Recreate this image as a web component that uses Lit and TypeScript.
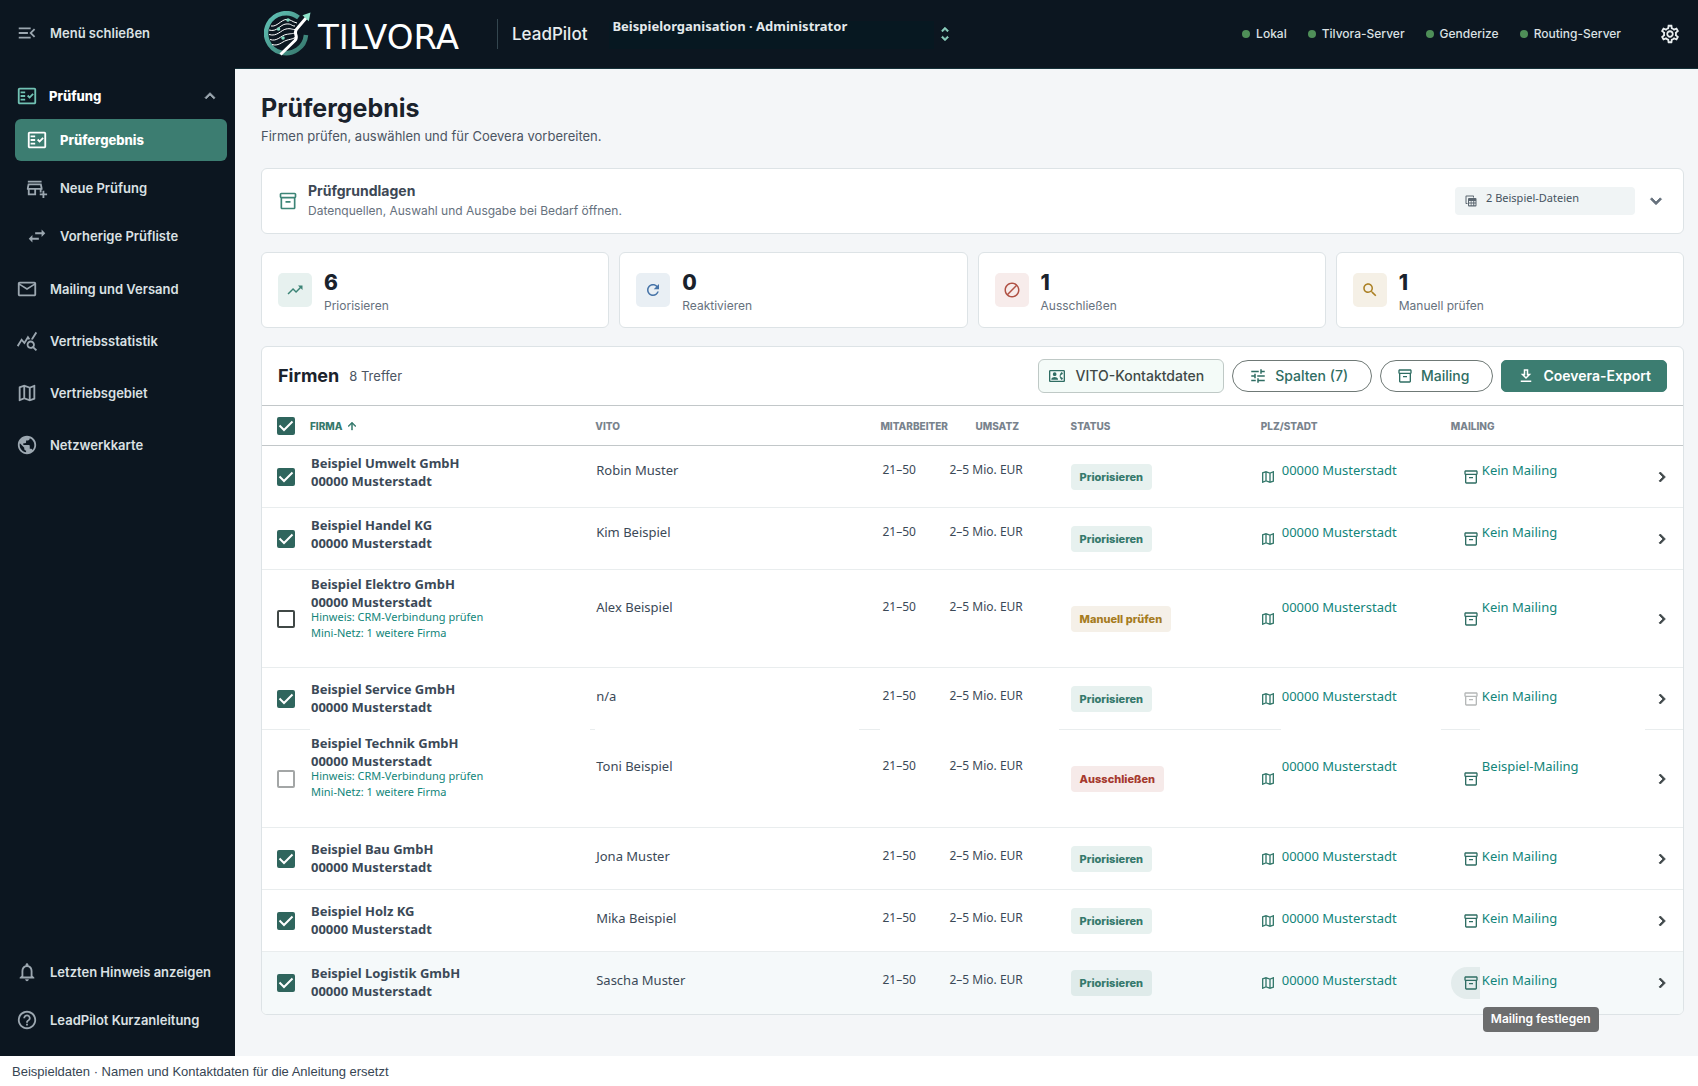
import { LitElement, html, css, svg, nothing } from "lit";
import { customElement } from "lit/decorators.js";
import { classMap } from "lit/directives/class-map.js";

const ICONS: Record<string, string> = {
  menuOpen: "M3 18h13v-2H3v2zm0-5h10v-2H3v2zm0-7v2h13V6H3zm18 9.59L17.42 12 21 8.41 19.59 7l-5 5 5 5L21 15.59z",
  factCheck: "M20 3H4c-1.1 0-2 .9-2 2v14c0 1.1.9 2 2 2h16c1.1 0 2-.9 2-2V5c0-1.1-.9-2-2-2zm0 16H4V5h16v14zM19.41 10.42L17.99 9l-3.17 3.17-1.41-1.42L12 12.16 14.82 15zM5 7h5v2H5zM5 11h5v2H5zM5 15h5v2H5z",
  addBusiness: "M15 17h2v-3h1v-2l-1-5H2l-1 5v2h1v6h9v-6h4v3zm-6 1H4v-4h5v4zm-5.96-6l.6-3h11.72l.6 3H3.04zM2 4h15v2H2zM20 18v-3h-2v3h-3v2h3v3h2v-3h3v-2z",
  swap: "M6.99 11L3 15l3.99 4v-3H14v-2H6.99v-3zM21 9l-3.99-4v3H10v2h7.01v3L21 9z",
  mail: "M22 6c0-1.1-.9-2-2-2H4c-1.1 0-2 .9-2 2v12c0 1.1.9 2 2 2h16c1.1 0 2-.9 2-2V6zm-2 0l-8 5-8-5h16zm0 12H4V8l8 5 8-5v10z",
  stats: "M19.88 18.47c.44-.7.7-1.51.7-2.39 0-2.49-2.01-4.5-4.5-4.5s-4.5 2.01-4.5 4.5 2.01 4.5 4.49 4.5c.88 0 1.7-.26 2.39-.7L21.58 23 23 21.58l-3.12-3.11zm-3.8.11c-1.38 0-2.5-1.12-2.5-2.5s1.12-2.5 2.5-2.5 2.5 1.12 2.5 2.5-1.12 2.5-2.5 2.5zm-.36-8.5c-.74.02-1.45.18-2.1.45l-.55-.83-3.8 6.18-3.01-3.52-3.63 5.81L1 17l5-8 3 3.5L13 6l2.72 4.08zm2.59.5c-.64-.28-1.33-.45-2.05-.49L21.38 2 23 3.18l-4.69 7.4z",
  map: "M20.5 3l-.16.03L15 5.1 9 3 3.36 4.9c-.21.07-.36.25-.36.48V20.5c0 .28.22.5.5.5l.16-.03L9 18.9l6 2.1 5.64-1.9c.21-.07.36-.25.36-.48V3.5c0-.28-.22-.5-.5-.5zM10 5.47l4 1.4v11.66l-4-1.4V5.47zm-5 .99l3-1.01v11.7l-3 1.16V6.46zm14 11.08l-3 1.01V6.86l3-1.16v11.84z",
  globe: "M12 2C6.48 2 2 6.48 2 12s4.48 10 10 10 10-4.48 10-10S17.52 2 12 2zm-1 17.93c-3.95-.49-7-3.85-7-7.93 0-.62.08-1.21.21-1.79L9 15v1c0 1.1.9 2 2 2v1.93zm6.9-2.54c-.26-.81-1-1.39-1.9-1.39h-1v-3c0-.55-.45-1-1-1H8v-2h2c.55 0 1-.45 1-1V7h2c1.1 0 2-.9 2-2v-.41c2.93 1.19 5 4.06 5 7.41 0 2.08-.8 3.97-2.1 5.39z",
  bell: "M12 22c1.1 0 2-.9 2-2h-4c0 1.1.89 2 2 2zm6-6v-5c0-3.07-1.64-5.64-4.5-6.32V4c0-.83-.67-1.5-1.5-1.5s-1.5.67-1.5 1.5v.68C7.63 5.36 6 7.92 6 11v5l-2 2v1h16v-1l-2-2zm-2 1H8v-6c0-2.48 1.51-4.5 4-4.5s4 2.02 4 4.5v6z",
  help: "M11 18h2v-2h-2v2zm1-16C6.48 2 2 6.48 2 12s4.48 10 10 10 10-4.48 10-10S17.52 2 12 2zm0 18c-4.41 0-8-3.59-8-8s3.59-8 8-8 8 3.59 8 8-3.59 8-8 8zm0-14c-2.21 0-4 1.79-4 4h2c0-1.1.9-2 2-2s2 .9 2 2c0 2-3 1.75-3 5h2c0-2.25 3-2.5 3-5 0-2.21-1.79-4-4-4z",
  archive: "M20 2H4c-1 0-2 .9-2 2v3.01c0 .72.43 1.34 1 1.69V20c0 1.1 1.1 2 2 2h14c.9 0 2-.9 2-2V8.7c.57-.35 1-.97 1-1.69V4c0-1.1-1-2-2-2zm-1 18H5V9h14v11zm1-13H4V4h16v3zM9 12h6v2H9z",
  expandMore: "M16.59 8.59L12 13.17 7.41 8.59 6 10l6 6 6-6z",
  expandLess: "M12 8l-6 6 1.41 1.41L12 10.83l4.59 4.58L18 14z",
  chevronRight: "M10 6L8.59 7.41 13.17 12l-4.58 4.59L10 18l6-6z",
  unfold: "M12 5.83L15.17 9l1.41-1.41L12 3 7.41 7.59 8.83 9 12 5.83zm0 12.34L8.83 15l-1.41 1.41L12 21l4.59-4.59L15.17 15 12 18.17z",
  trending: "M16 6l2.29 2.29-4.88 4.88-4-4L2 16.59 3.41 18l6-6 4 4 6.3-6.29L22 12V6z",
  refresh: "M17.65 6.35C16.2 4.9 14.21 4 12 4c-4.42 0-7.99 3.58-7.99 8s3.57 8 7.99 8c3.73 0 6.84-2.55 7.73-6h-2.08c-.82 2.33-3.04 4-5.65 4-3.31 0-6-2.69-6-6s2.69-6 6-6c1.66 0 3.14.69 4.22 1.78L13 11h7V4l-2.35 2.35z",
  block: "M12 2C6.48 2 2 6.48 2 12s4.48 10 10 10 10-4.48 10-10S17.52 2 12 2zM4 12c0-4.42 3.58-8 8-8 1.85 0 3.55.63 4.9 1.69L5.69 16.9C4.63 15.55 4 13.85 4 12zm8 8c-1.85 0-3.55-.63-4.9-1.69L18.31 7.1C19.37 8.45 20 10.15 20 12c0 4.42-3.58 8-8 8z",
  search: "M15.5 14h-.79l-.28-.27C15.41 12.59 16 11.11 16 9.5 16 5.91 13.09 3 9.5 3S3 5.91 3 9.5 5.91 16 9.5 16c1.61 0 3.09-.59 4.23-1.57l.27.28v.79l5 4.99L20.49 19l-4.99-5zm-6 0C7.01 14 5 11.99 5 9.5S7.01 5 9.5 5 14 7.01 14 9.5 11.99 14 9.5 14z",
  tune: "M3 17v2h6v-2H3zM3 5v2h10V5H3zm10 16v-2h8v-2h-8v-2h-2v6h2zM7 9v2H3v2h4v2h2V9H7zm14 4v-2H11v2h10zm-6-4h2V7h4V5h-4V3h-2v6z",
  download: "M19 9h-4V3H9v6H5l7 7 7-7zm-8 2V5h2v6h1.17L12 13.17 9.83 11H11zm-6 7h14v2H5z",
  arrowUp: "M4 12l1.41 1.41L11 7.83V20h2V7.83l5.58 5.59L20 12l-8-8-8 8z",
  contact: "M22 3H2C.9 3 0 3.9 0 5v14c0 1.1.9 2 2 2h20c1.1 0 2-.9 2-2V5c0-1.1-.9-2-2-2zm0 16H2V5h20v14zM8.5 6.500a2.800 2.800 0 1 1 0 5.600 2.800 2.800 0 0 1 0-5.600zM3.500 17.600v-1c0-1.900 3.300-3 5-3s5 1.100 5 3v1zM17.850 14h1.640L21 16l-1.990 1.990c-1.310-.98-2.280-2.380-2.730-3.990-.18-.64-.28-1.310-.28-2s.1-1.360.28-2c.45-1.620 1.420-3.010 2.730-3.990L21 8l-1.510 2h-1.640c-.22.63-.35 1.300-.35 2s.13 1.370.35 2z",
  files: "M4 1h12c1.100 0 2 .9 2 2v2h-2V3H3v13h2v2H3c-1.100 0-2-.9-2-2V3c0-1.100.9-2 3-2zM8 6h13a2 2 0 0 1 2 2v13a2 2 0 0 1-2 2H8a2 2 0 0 1-2-2V8a2 2 0 0 1 2-2zM8 12v3h3.500v-3zM13 12v3h3.500v-3zM18.500 12v3H21v-3zM8 17v3.500h3.500V17zM13 17v3.500h3.500V17zM18.500 17v3.500H21V17z",
  settings: "M19.43 12.98c.04-.32.07-.64.07-.98 0-.34-.03-.66-.07-.98l2.11-1.65c.19-.15.24-.42.12-.64l-2-3.46c-.09-.16-.26-.25-.44-.25-.06 0-.12.01-.17.03l-2.49 1c-.52-.4-1.08-.73-1.69-.98l-.38-2.65C14.46 2.18 14.25 2 14 2h-4c-.25 0-.46.18-.49.42l-.38 2.65c-.61.25-1.17.59-1.69.98l-2.49-1c-.06-.02-.12-.03-.18-.03-.17 0-.34.09-.43.25l-2 3.46c-.13.22-.07.49.12.64l2.11 1.65c-.04.32-.07.65-.07.98 0 .33.03.66.07.98l-2.11 1.65c-.19.15-.24.42-.12.64l2 3.46c.09.16.26.25.44.25.06 0 .12-.01.17-.03l2.49-1c.52.4 1.08.73 1.69.98l.38 2.65c.03.24.24.42.49.42h4c.25 0 .46-.18.49-.42l.38-2.65c.61-.25 1.17-.59 1.69-.98l2.49 1c.06.02.12.03.18.03.17 0 .34-.09.43-.25l2-3.46c.12-.22.07-.49-.12-.64l-2.11-1.65zm-1.98-1.71c.04.31.05.52.05.73 0 .21-.02.43-.05.73l-.14 1.13.89.7 1.08.84-.7 1.21-1.27-.51-1.04-.42-.9.68c-.43.32-.84.56-1.25.73l-1.06.43-.16 1.13-.2 1.35h-1.4l-.19-1.35-.16-1.13-1.06-.43c-.43-.18-.83-.41-1.23-.71l-.91-.7-1.06.43-1.27.51-.7-1.21 1.08-.84.89-.7-.14-1.13c-.03-.31-.05-.54-.05-.74s.02-.43.05-.73l.14-1.13-.89-.7-1.08-.84.7-1.21 1.27.51 1.04.42.9-.68c.43-.32.84-.56 1.25-.73l1.06-.43.16-1.13.2-1.35h1.39l.19 1.35.16 1.13 1.06.43c.43.18.83.41 1.23.71l.91.7 1.06-.43 1.27-.51.7 1.21-1.07.85-.89.7.14 1.13zM12 8c-2.21 0-4 1.79-4 4s1.79 4 4 4 4-1.79 4-4-1.79-4-4-4zm0 6c-1.1 0-2-.9-2-2s.9-2 2-2 2 .9 2 2-.9 2-2 2z",
};

const icon = (name: string, size: number, bold = false) => html`
  <svg class=${bold ? "icon bold" : "icon"} width=${size} height=${size} viewBox="0 0 24 24" aria-hidden="true">
    <path fill="currentColor" fill-rule="evenodd" d=${ICONS[name]}></path>
  </svg>`;

interface Firm {
  name: string;
  contact: string;
  status: "prio" | "manual" | "exclude";
  checked: boolean;
  layout: "high" | "mid" | "tall";
  hints?: boolean;
  disabledBox?: boolean;
  disabledMailing?: boolean;
  mailing?: string;
  covers?: boolean;
  hovered?: boolean;
}

const FIRMS: Firm[] = [
  { name: "Beispiel Umwelt GmbH", contact: "Robin Muster", status: "prio", checked: true, layout: "high" },
  { name: "Beispiel Handel KG", contact: "Kim Beispiel", status: "prio", checked: true, layout: "high" },
  { name: "Beispiel Elektro GmbH", contact: "Alex Beispiel", status: "manual", checked: false, layout: "tall", hints: true },
  { name: "Beispiel Service GmbH", contact: "n/a", status: "prio", checked: true, layout: "mid", disabledMailing: true },
  { name: "Beispiel Technik GmbH", contact: "Toni Beispiel", status: "exclude", checked: false, layout: "tall", hints: true, disabledBox: true, mailing: "Beispiel-Mailing", covers: true },
  { name: "Beispiel Bau GmbH", contact: "Jona Muster", status: "prio", checked: true, layout: "mid" },
  { name: "Beispiel Holz KG", contact: "Mika Beispiel", status: "prio", checked: true, layout: "mid" },
  { name: "Beispiel Logistik GmbH", contact: "Sascha Muster", status: "prio", checked: true, layout: "mid", hovered: true },
];

const STATUS_LABEL = { prio: "Priorisieren", manual: "Manuell prüfen", exclude: "Ausschließen" };

@customElement("app-root")
export class AppRoot extends LitElement {
  static styles = css`
    :host {
      display: flex;
      flex-direction: column;
      min-height: 100vh;
      background: #fff;
      color: #1a222c;
      font-family: Inter, "Noto Sans", sans-serif;
      font-size: 13px;
      line-height: 20px;
    }
    * { box-sizing: border-box; }
    button, select { font: inherit; color: inherit; border: 0; background: none; padding: 0; cursor: pointer; text-align: left; }
    a { color: inherit; text-decoration: none; }
    h1, h2, p { margin: 0; }
    .icon { display: block; flex: none; }
    .icon.bold path { stroke: currentColor; stroke-width: 1; }

    .shell { flex: 1; display: flex; background: #f4f6f8; }
    .side {
      flex: none; width: 235px; display: flex; flex-direction: column;
      background: #0c1620; color: #dbe1e4; font-weight: 600; padding: 7px 0 12px;
    }
    .side .icon { color: #9ca7b0; }
    .item { display: flex; align-items: center; gap: 12px; height: 52px; padding: 0 16px; }
    .item.low { height: 48px; }
    .group { margin-top: 14px; height: 46px; color: #fff; font-weight: 800; padding-right: 15px; gap: 11px; }
    .group .icon:first-child { color: #71c2b4; }
    .group span { flex: 1; }
    .sub { margin: 0 8px 6px 15px; height: 42px; padding: 0 11px; gap: 12px; border-radius: 6px; }
    .sub.active { background: #3c7d71; color: #fff; font-weight: 800; }
    .sub.active .icon { color: #fff; }
    .fill { flex: 1; }

    .page { flex: 1; min-width: 0; display: flex; flex-direction: column; }
    .top {
      display: flex; align-items: center; height: 69px; padding: 0 12px 0 29px;
      background: #0c1620; border-bottom: 1px solid #163139; color: #dbe1e4;
    }
    .brand { display: flex; align-items: center; gap: 7px; color: #fff; }
    .word { width: 161px; font-family: "DejaVu Sans", sans-serif; font-size: 34px; line-height: 40px; padding-top: 6px; }
    .product { margin-left: 18px; padding-left: 14px; border-left: 1px solid #34464f; font-size: 17px; font-weight: 500; line-height: 30px; color: #e8edee; }
    .org { display: flex; align-items: center; gap: 2px; margin-left: 22px; color: #8fd3c0; }
    .org select {
      appearance: none; width: 325px; height: 38px; padding: 0 0 16px 3px; line-height: 20px;
      background: linear-gradient(#071821, #071821) 0 6px / 100% 28px no-repeat;
      color: #e4eaec; font-family: "Noto Sans", sans-serif; font-size: 13px; font-weight: 700;
    }
    .services { display: flex; gap: 21px; margin: 0 33px 0 auto; padding: 0; list-style: none; font-size: 12px; font-weight: 500; }
    .services li { display: flex; align-items: center; gap: 6px; white-space: nowrap; }
    .services li::before { content: ""; width: 8px; height: 8px; border-radius: 50%; background: #4f8f58; }
    .gear { padding: 5px; color: #e8edee; }

    main { padding: 23px 14px 41px 26px; }
    h1 { font-size: 25px; line-height: 32px; font-weight: 700; }
    .lead { margin-top: 2px; color: #4b5563; }
    .card { background: #fff; border: 1px solid #dde3e6; border-radius: 6px; }

    .basis { width: 100%; display: flex; align-items: center; margin-top: 22px; padding: 12px 16px; color: #66717d; }
    .basis > .icon:first-child { color: #3c8476; }
    .basis-text { flex: 1; margin-left: 10px; display: block; }
    .basis-text b { display: block; color: #3d4855; font-size: 14px; font-weight: 700; }
    .basis-text span { display: block; font-size: 12px; }
    .files {
      display: flex; align-items: center; gap: 9px; width: 180px; height: 28px; margin-right: 10px; padding: 0 10px;
      background: #f0f4f5; border-radius: 4px; color: #5b6670;
    }
    .files span { font-family: "Noto Sans", sans-serif; font-size: 11px; line-height: 18px; padding-bottom: 6px; color: #465361; }

    .stats { display: grid; grid-template-columns: repeat(4, minmax(0, 1fr)); gap: 10px; margin: 18px 0; }
    .stat { display: flex; align-items: center; gap: 12px; height: 76px; padding: 0 16px; }
    .badge { display: grid; place-items: center; width: 34px; height: 34px; border-radius: 5px; }
    .badge.green { background: #e7f1ef; color: #3c8476; }
    .badge.blue { background: #e9eff4; color: #4774a8; }
    .badge.red { background: #f7eceb; color: #b05245; }
    .badge.amber { background: #f5f0e6; color: #ab8024; }
    .figures { padding-top: 6px; }
    .stat strong { display: block; font-size: 21px; line-height: 26px; font-weight: 800; }
    .stat span { display: block; font-size: 12px; color: #66717d; }

    .tools { display: flex; align-items: center; gap: 8px; height: 58px; padding: 0 16px; }
    h2 { font-size: 18px; line-height: 24px; }
    .hits { flex: 1; margin-left: 2px; color: #4b5563; }
    .btn { display: flex; align-items: center; gap: 8px; height: 32px; padding: 0 23px 0 16px; border: 1px solid #6f7976; border-radius: 16px; color: #2f6d63; font-size: 14px; font-weight: 500; white-space: nowrap; }
    .btn.vito { height: 34px; gap: 10px; padding: 0 19px 0 10px; background: #f4fbf8; border: 1px solid #bfc9c6; border-radius: 6px; color: #3f4947; }
    .btn.vito .icon { color: #2f6d63; }
    .btn.export { gap: 8px; padding: 0 15px; background: #3c7d71; border-color: #3c7d71; border-radius: 5px; color: #fff; font-weight: 600; }

    table { display: block; }
    thead, tbody { display: block; }
    tr { display: grid; grid-template-columns: 48px repeat(2, minmax(0, 3fr)) repeat(2, minmax(0, 1fr)) repeat(3, minmax(0, 2fr)) 42px; }
    thead tr { height: 41px; align-items: center; border-top: 1px solid #c2c7c9; border-bottom: 1px solid #c2c7c9; }
    th { padding: 0; text-align: left; font-size: 10px; line-height: 16px; font-weight: 800; color: #79838d; }
    .sort { display: flex; align-items: center; gap: 4px; color: #35796c; font-weight: 800; }
    tbody tr { min-height: 62px; border-bottom: 1px solid #e9edee; --firm-top: 12px; --text-top: 19px; }
    tbody tr:last-child { border-bottom: 0; border-radius: 0 0 5px 5px; }
    tr.high { --firm-top: 8px; --text-top: 15px; }
    tr.tall { min-height: 98px; --firm-top: 5px; --text-top: 28px; }
    tr.hovered { background: #f5f9fa; }
    td { padding: 0; min-width: 0; display: flex; align-items: center; }
    td.text, td .text { align-self: stretch; font-family: "Noto Sans", sans-serif; font-size: 13px; line-height: 18px; color: #3b4957; padding: var(--text-top) 0 0 1px; white-space: nowrap; }
    td.text { align-items: flex-start; }
    td.firm { display: block; padding-top: var(--firm-top); font-weight: 700; }
    td.num { font-size: 12px; padding-left: 2px; }
    td.rev { margin-left: -26px; padding-left: 0; }
    tr.covers .cover { position: relative; margin-top: -1px; background: #fff; }
    tr.covers td.firm { margin-right: 5px; }
    tr.covers td.vito { margin-right: 21px; }
    tr.covers td.rev { margin-right: 12px; }
    tr.covers td .text { margin-right: 10px; }
    tr.covers td.mail .text { margin-right: -4px; }
    .link { flex: 1; }
    td .link { color: #12857a; }
    td.mail .link { padding-left: 2px; }
    .hints { display: block; margin-top: -2px; font-size: 11px; font-weight: 400; line-height: 16px; color: #12857a; }
    .chip { padding: 3px 9px; border-radius: 4px; font-size: 11px; font-weight: 800; background: #e7f1ef; color: #35796c; }
    .chip.manual { background: #f5f0e8; color: #a67c1f; }
    .chip.exclude { background: #f6eae9; color: #a5392e; }
    .hovered .chip { background: #dfebea; }
    .place .icon { margin: 0 5px 0 -1px; color: #35796c; }
    .mailbtn { display: grid; place-items: center; height: 32px; width: 29px; padding-left: 12px; border-radius: 16px 0 0 16px; color: #2f6d63; }
    .mailbtn:disabled { color: #b5b8b8; }
    .hovered .mailbtn { background: #e3ecec; }
    .mail { position: relative; }
    .tip { position: absolute; left: 32px; top: 55px; padding: 2px 8px 3px; border-radius: 4px; background: #6c6d6e; color: #fff; font-size: 12px; font-weight: 600; white-space: nowrap; }
    .go { color: #40484a; justify-content: center; }

    .check { position: relative; display: grid; width: 18px; height: 18px; margin-left: 15px; }
    .check input { appearance: none; width: 18px; height: 18px; margin: 0; border: 2px solid #404846; border-radius: 2px; }
    .check input:checked { background: #2f655d; border-color: #2f655d; }
    .check input:disabled { border-color: #a3a6a6; }
    .check svg { position: absolute; inset: 0; pointer-events: none; }

    footer { height: 30px; padding: 2px 12px 0; font-family: "Liberation Sans", Arial, sans-serif; font-size: 13px; line-height: 28px; color: #374553; }
  `;

  private logo() {
    return html`<svg width="47" height="46" viewBox="0 0 47 46" aria-hidden="true">
      <defs>
        <linearGradient id="ring" x1="0" y1="0" x2="1" y2="1">
          <stop offset="0" stop-color="#62c2b6"></stop>
          <stop offset="1" stop-color="#35776c"></stop>
        </linearGradient>
      </defs>
      <path d="M34.500 6.500A20 20 0 1 0 42 24" fill="none" stroke="url(#ring)" stroke-width="4.500"></path>
      ${["M7 15C13 16 17 9 22 8.500S28 11 33 12", "M5 19C13 21.500 16 13.500 22 13S27 15 31 15", "M5 23.500C13 26 17 19 22 18S27 18.500 31 18.500", "M6 28.500C13 31 17 24.500 22 23.500S27 23 31 22", "M8 33.500C14 35.500 18 31 22 29.500S28 28.500 31 26.500"].map(
        (d) => svg`<path d=${d} fill="none" stroke="#fff" stroke-width="1"></path>`
      )}
      <path d="M16.500 43.500L31 29.500C33.500 27 32 24 31.500 22.500C31 20 32.500 18 34 16.500L42.500 6.500" fill="none" stroke="#fff" stroke-width="3"></path>
      <path d="M46.500 1.500L38.500 4.200L44.800 10.200Z" fill="#8ee3c9"></path>
      <circle cx="24" cy="9" r="1.800" fill="#7fd8c0"></circle>
      <circle cx="14.500" cy="18" r="1.800" fill="#7fd8c0"></circle>
      <circle cx="19" cy="27" r="1.800" fill="#7fd8c0"></circle>
    </svg>`;
  }

  private box(label: string, checked: boolean, disabled = false) {
    return html`<span class="check">
      <input type="checkbox" aria-label=${label} .checked=${checked} ?disabled=${disabled} />
      ${checked
        ? html`<svg width="18" height="18" viewBox="0 0 18 18" aria-hidden="true">
            <path d="M2.500 8.500L7 13L15.500 4.500" fill="none" stroke="#fff" stroke-width="2"></path>
          </svg>`
        : nothing}
    </span>`;
  }

  private stat(tone: string, name: string, value: string, label: string) {
    return html`<div class="card stat">
      <div class="badge ${tone}">${icon(name, 18)}</div>
      <div class="figures"><strong>${value}</strong><span>${label}</span></div>
    </div>`;
  }

  private row(f: Firm) {
    const cls = { [f.layout]: true, covers: !!f.covers, hovered: !!f.hovered };
    return html`<tr class=${classMap(cls)}>
      <td>${this.box(`${f.name} auswählen`, f.checked, f.disabledBox)}</td>
      <td class="text firm cover">
        ${f.name}<br />00000 Musterstadt
        ${f.hints ? html`<span class="hints">Hinweis: CRM-Verbindung prüfen<br />Mini-Netz: 1 weitere Firma</span>` : nothing}
      </td>
      <td class="text vito cover">${f.contact}</td>
      <td class="text num cover">21–50</td>
      <td class="text num rev cover">2–5 Mio. EUR</td>
      <td><span class="chip ${f.status}">${STATUS_LABEL[f.status]}</span></td>
      <td class="place">${icon("map", 16)}<a class="text link cover" href="#karte">00000 Musterstadt</a></td>
      <td class="mail">
        <button class="mailbtn" aria-label="Mailing festlegen" ?disabled=${f.disabledMailing}>${icon("archive", 16)}</button>
        <a class="text link cover" href="#mailing">${f.mailing ?? "Kein Mailing"}</a>
        ${f.hovered ? html`<span class="tip" role="tooltip">Mailing festlegen</span>` : nothing}
      </td>
      <td class="go"><button aria-label="Details öffnen">${icon("chevronRight", 20, true)}</button></td>
    </tr>`;
  }

  render() {
    return html`
      <div class="shell">
        <nav class="side" aria-label="Hauptmenü">
          <button class="item">${icon("menuOpen", 22)}<span>Menü schließen</span></button>
          <button class="item group">${icon("factCheck", 22)}<span>Prüfung</span>${icon("expandLess", 20, true)}</button>
          <a class="item sub active" href="#ergebnis">${icon("factCheck", 22)}<span>Prüfergebnis</span></a>
          <a class="item sub" href="#neu">${icon("addBusiness", 22)}<span>Neue Prüfung</span></a>
          <a class="item sub" href="#vorherige">${icon("swap", 22)}<span>Vorherige Prüfliste</span></a>
          <a class="item" href="#mailing">${icon("mail", 22)}<span>Mailing und Versand</span></a>
          <a class="item" href="#statistik">${icon("stats", 22)}<span>Vertriebsstatistik</span></a>
          <a class="item" href="#gebiet">${icon("map", 22)}<span>Vertriebsgebiet</span></a>
          <a class="item" href="#netzwerk">${icon("globe", 22)}<span>Netzwerkkarte</span></a>
          <div class="fill"></div>
          <button class="item low">${icon("bell", 22)}<span>Letzten Hinweis anzeigen</span></button>
          <a class="item low" href="#hilfe">${icon("help", 22)}<span>LeadPilot Kurzanleitung</span></a>
        </nav>
        <div class="page">
          <header class="top">
            <div class="brand">${this.logo()}<span class="word">TILVORA</span></div>
            <div class="product">LeadPilot</div>
            <div class="org">
              <select aria-label="Organisation"><option>Beispielorganisation · Administrator</option></select>
              ${icon("unfold", 18, true)}
            </div>
            <ul class="services">
              <li>Lokal</li>
              <li>Tilvora-Server</li>
              <li>Genderize</li>
              <li>Routing-Server</li>
            </ul>
            <button class="gear" aria-label="Einstellungen">${icon("settings", 22)}</button>
          </header>
          <main>
            <h1>Prüfergebnis</h1>
            <p class="lead">Firmen prüfen, auswählen und für Coevera vorbereiten.</p>
            <button class="card basis" aria-expanded="false">
              ${icon("archive", 20)}
              <span class="basis-text"><b>Prüfgrundlagen</b><span>Datenquellen, Auswahl und Ausgabe bei Bedarf öffnen.</span></span>
              <span class="files">${icon("files", 12)}<span>2 Beispiel-Dateien</span></span>
              ${icon("expandMore", 22, true)}
            </button>
            <section class="stats" aria-label="Kennzahlen">
              ${this.stat("green", "trending", "6", "Priorisieren")}
              ${this.stat("blue", "refresh", "0", "Reaktivieren")}
              ${this.stat("red", "block", "1", "Ausschließen")}
              ${this.stat("amber", "search", "1", "Manuell prüfen")}
            </section>
            <section class="card">
              <div class="tools">
                <h2>Firmen</h2>
                <span class="hits">8 Treffer</span>
                <button class="btn vito">${icon("contact", 16)}VITO-Kontaktdaten</button>
                <button class="btn">${icon("tune", 18)}Spalten (7)</button>
                <button class="btn">${icon("archive", 16)}Mailing</button>
                <button class="btn export">${icon("download", 18)}Coevera-Export</button>
              </div>
              <table>
                <thead>
                  <tr>
                    <th>${this.box("Alle auswählen", true)}</th>
                    <th><button class="sort">FIRMA ${icon("arrowUp", 12, true)}</button></th>
                    <th>VITO</th>
                    <th>MITARBEITER</th>
                    <th>UMSATZ</th>
                    <th>STATUS</th>
                    <th>PLZ/STADT</th>
                    <th>MAILING</th>
                    <th></th>
                  </tr>
                </thead>
                <tbody>${FIRMS.map((f) => this.row(f))}</tbody>
              </table>
            </section>
          </main>
        </div>
      </div>
      <footer>Beispieldaten · Namen und Kontaktdaten für die Anleitung ersetzt</footer>
    `;
  }
}
